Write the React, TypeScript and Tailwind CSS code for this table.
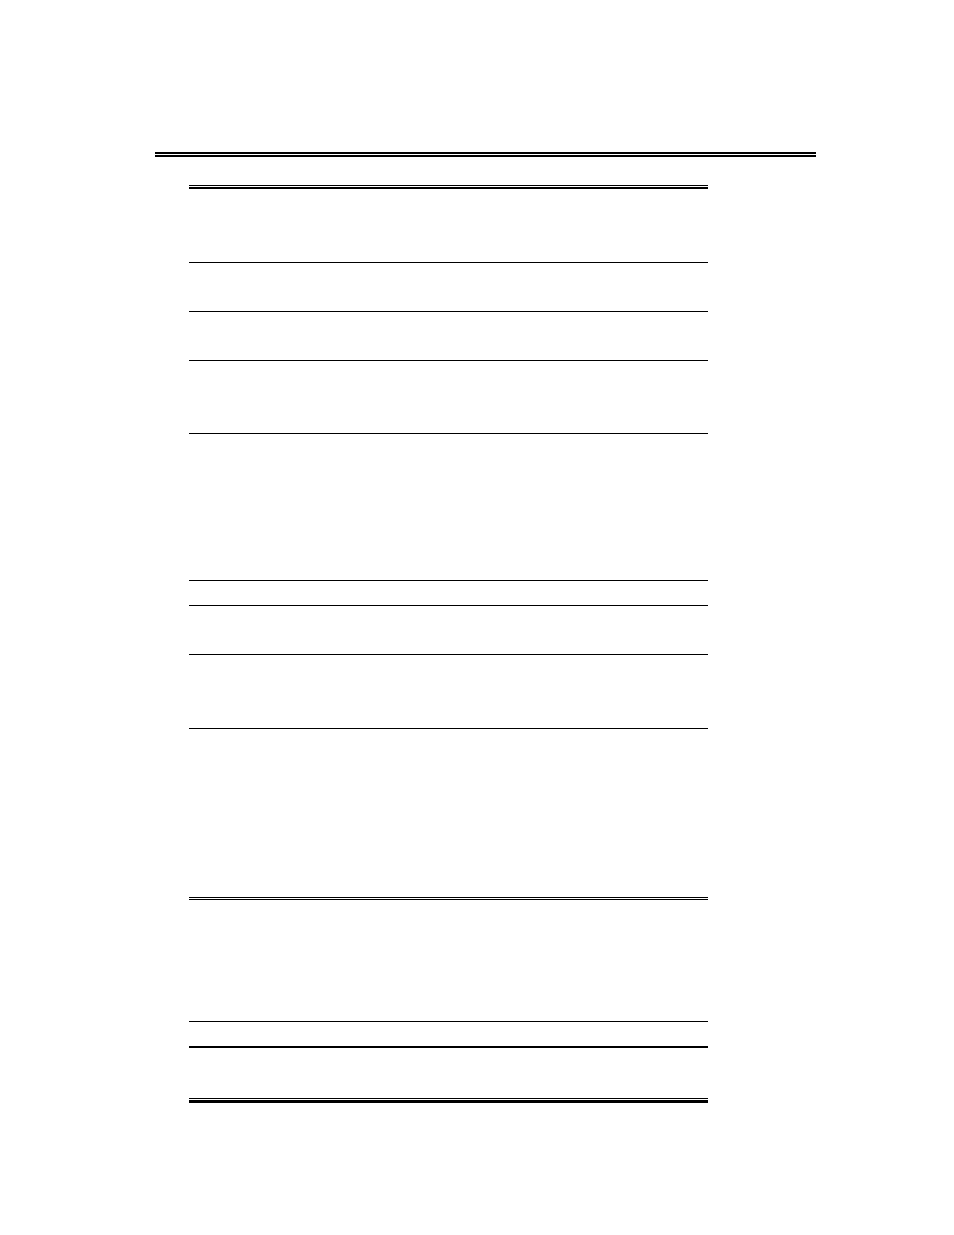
import React from 'react';

// empty ruled table page: row heights include the bottom rule
const rows: { h: string; rule: string }[] = [
  { h: 'h-[74px]', rule: 'border-b' },
  { h: 'h-[49px]', rule: 'border-b' },
  { h: 'h-[49px]', rule: 'border-b' },
  { h: 'h-[73px]', rule: 'border-b' },
  { h: 'h-[147px]', rule: 'border-b' },
  { h: 'h-[25px]', rule: 'border-b' },
  { h: 'h-[49px]', rule: 'border-b' },
  { h: 'h-[74px]', rule: 'border-b' },
  { h: 'h-[171px]', rule: 'border-b-[3px] border-double' },
  { h: 'h-[122px]', rule: 'border-b' },
  { h: 'h-[26px]', rule: 'border-b-2' },
  { h: 'h-[51px]', rule: 'border-b' },
];

export default function App() {
  return (
    <div className="w-[954px] min-h-[1235px] bg-white flex flex-col" style={{ fontFamily: '"Liberation Sans", Arial, sans-serif' }}>
      {/* page header rule */}
      <div className="ml-[155px] mt-[152px] w-[661px] h-[5px] border-t-2 border-b-2 border-black" />

      {/* table */}
      <div className="ml-[189px] mt-[28px] w-[519px] flex flex-col">
        <div className="h-[4px] border-t border-b-2 border-black" />
        {rows.map((r, i) => (
          <div key={i} className={`${r.h} ${r.rule} border-black`} />
        ))}
        <div className="mt-px h-[3px] bg-black" />
      </div>
    </div>
  );
}
